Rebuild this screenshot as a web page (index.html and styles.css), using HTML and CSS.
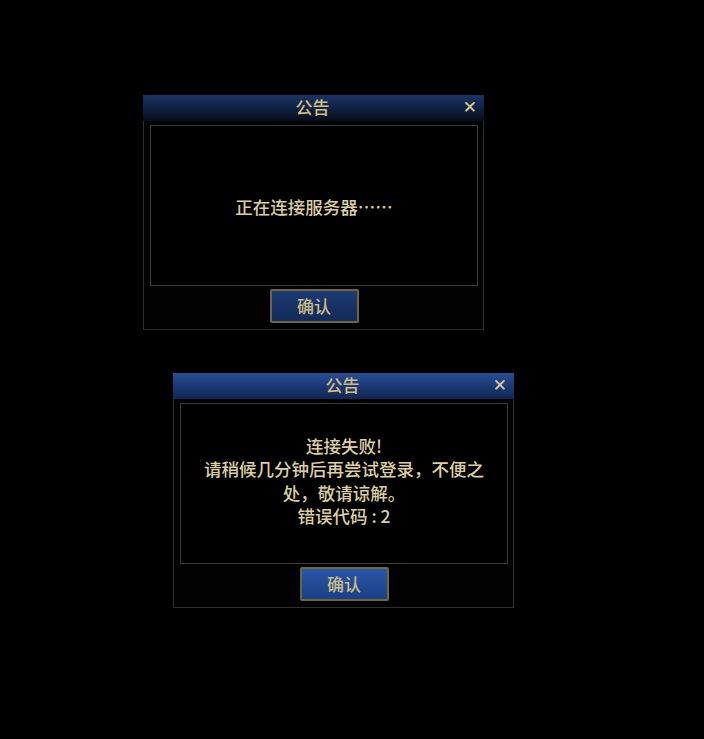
FILE: index.html
```html
<!DOCTYPE html>
<html lang="zh-CN">
<head>
<meta charset="utf-8">
<title>公告</title>
<link rel="stylesheet" href="styles.css">
</head>
<body>
<div class="dialog dialog-inactive first">
  <div class="titlebar">
    <span class="title">公告</span>
    <span class="close">✕</span>
  </div>
  <div class="content">
    <p class="msg">正在连接服务器……</p>
  </div>
  <div class="actions">
    <button class="btn">确认</button>
  </div>
</div>
<div class="dialog dialog-active second">
  <div class="titlebar">
    <span class="title">公告</span>
    <span class="close">✕</span>
  </div>
  <div class="content">
    <p class="msg">连接失败!<br>请稍候几分钟后再尝试登录，不便之<br>处，敬请谅解。<br>错误代码 : 2</p>
  </div>
  <div class="actions">
    <button class="btn">确认</button>
  </div>
</div>
</body>
</html>
```
FILE: styles.css
```css
html, body {
  margin: 0;
  padding: 0;
  background: #000;
}
body {
  width: 704px;
  height: 739px;
  overflow: hidden;
  font-family: "Noto Sans CJK SC", "DejaVu Sans", sans-serif;
}
.dialog {
  width: 341px;
  height: 235px;
  box-sizing: border-box;
  border: 1px solid #2e2e2e;
  border-top: none;
  background: #020202;
  display: flex;
  flex-direction: column;
}
.first {
  margin: 95px 0 0 143px;
}
.second {
  margin: 43px 0 0 173px;
}
.titlebar {
  height: 26px;
  margin: 0 -1px;
  position: relative;
  display: flex;
  align-items: center;
  justify-content: center;
}
.dialog-inactive .titlebar {
  background: linear-gradient(#1c3463 0%, #12254a 40%, #060c1a 100%);
}
.dialog-active .titlebar {
  background: linear-gradient(#2a4f94 0%, #1c3a7a 45%, #112652 100%);
}
.title {
  color: #d2bd82;
  font-size: 17px;
  font-weight: 500;
  line-height: 26px;
  margin-top: -2px;
  margin-left: -2px;
}
.close {
  position: absolute;
  right: 7px;
  top: -1px;
  color: #e0cf98;
  font-size: 17px;
  font-weight: 700;
  line-height: 26px;
  font-family: "DejaVu Sans", sans-serif;
}
.content {
  margin: 4px 5px 0 6px;
  height: 161px;
  box-sizing: border-box;
  border: 1px solid #3a3a3a;
  background: #000;
  display: flex;
  align-items: center;
  justify-content: center;
}
.msg {
  margin: 0;
  color: #dccf9f;
  font-size: 17.5px;
  font-weight: 500;
  line-height: 23.5px;
  text-align: center;
}
.first .msg {
  margin-top: 3px;
}
.second .msg {
  margin-top: -6px;
}
.actions {
  display: flex;
  justify-content: center;
  padding-top: 3px;
  padding-left: 1px;
}
.btn {
  width: 89px;
  height: 34px;
  box-sizing: border-box;
  border: 2px solid #6f6444;
  border-radius: 2px;
  color: #cbbd86;
  font-family: "Noto Sans CJK SC", "DejaVu Sans", sans-serif;
  font-size: 17px;
  font-weight: 500;
  padding: 0;
  line-height: 28px;
}
.dialog-inactive .btn {
  background: linear-gradient(#1d3a73, #122a58);
}
.dialog-active .btn {
  background: linear-gradient(#2a56a6, #1b3f85);
}
```
